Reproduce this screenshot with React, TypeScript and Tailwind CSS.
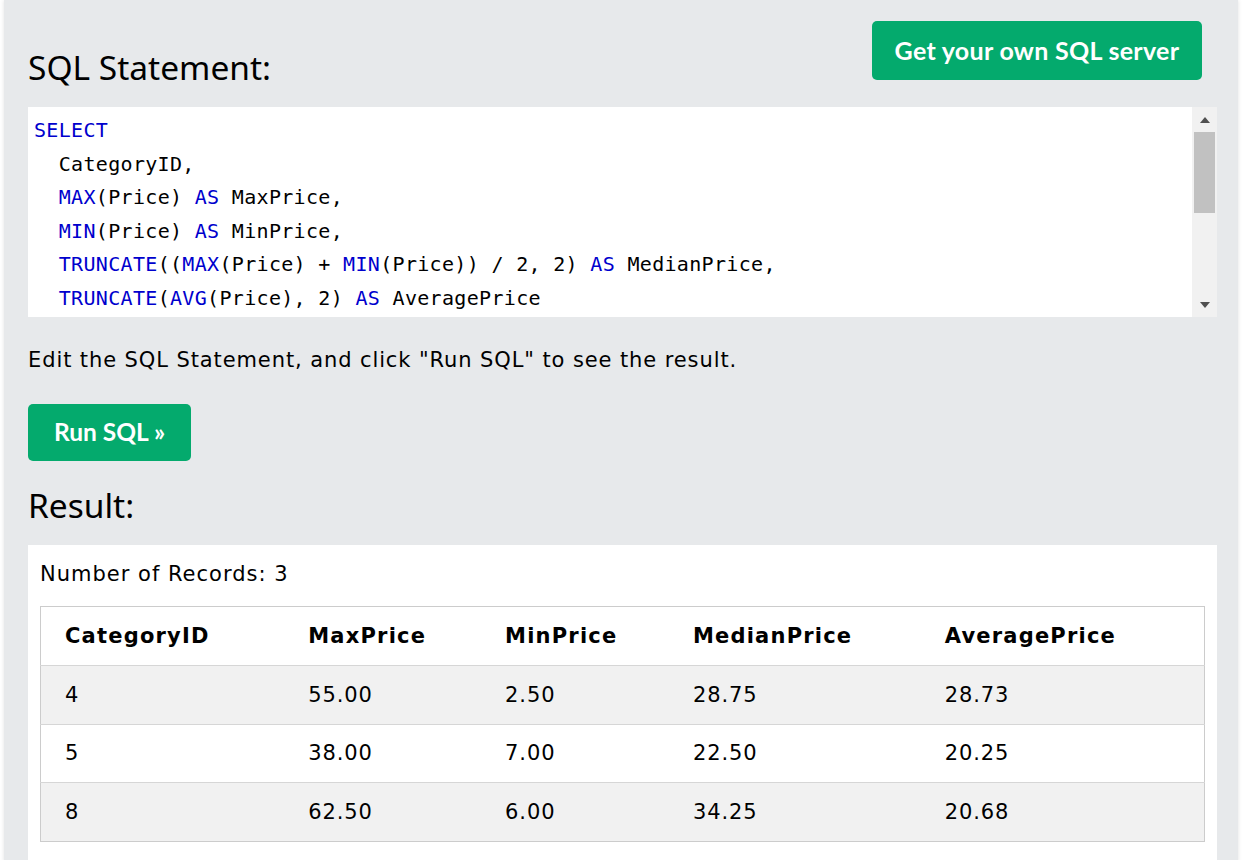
const KW = "text-[#0000cd]";

function Kw({ children }: { children: React.ReactNode }) {
  return <span className={KW}>{children}</span>;
}

const rows = [
  ["4", "55.00", "2.50", "28.75", "28.73"],
  ["5", "38.00", "7.00", "22.50", "20.25"],
  ["8", "62.50", "6.00", "34.25", "20.68"],
];

const headers = ["CategoryID", "MaxPrice", "MinPrice", "MedianPrice", "AveragePrice"];
const colWidths = ["w-[244px]", "w-[197px]", "w-[188px]", "w-[252px]", "w-[284px]"];

function CodeBox() {
  return (
    <div className="flex h-[210px] bg-white">
      <pre className="flex-1 overflow-hidden pl-[6px] pt-[7px] font-['DejaVu_Sans_Mono',monospace] text-[20px] leading-[33.6px] tracking-[0.32px] text-black">
        <Kw>SELECT</Kw>
        {"\n  CategoryID,\n  "}
        <Kw>MAX</Kw>
        {"(Price) "}
        <Kw>AS</Kw>
        {" MaxPrice,\n  "}
        <Kw>MIN</Kw>
        {"(Price) "}
        <Kw>AS</Kw>
        {" MinPrice,\n  "}
        <Kw>TRUNCATE</Kw>
        {"(("}
        <Kw>MAX</Kw>
        {"(Price) + "}
        <Kw>MIN</Kw>
        {"(Price)) / 2, 2) "}
        <Kw>AS</Kw>
        {" MedianPrice,\n  "}
        <Kw>TRUNCATE</Kw>
        {"("}
        <Kw>AVG</Kw>
        {"(Price), 2) "}
        <Kw>AS</Kw>
        {" AveragePrice"}
      </pre>
      {/* scrollbar */}
      <div className="flex w-[25px] flex-col items-center bg-[#f1f1f1]">
        <div className="flex h-[25px] items-center justify-center">
          <svg width="10" height="6" viewBox="0 0 10 6">
            <path d="M0 6 L5 0 L10 6 Z" fill="#505050" />
          </svg>
        </div>
        <div className="h-[81px] w-[21px] bg-[#c1c1c1]" />
        <div className="flex-1" />
        <div className="flex h-[25px] items-center justify-center">
          <svg width="10" height="6" viewBox="0 0 10 6">
            <path d="M0 0 L5 6 L10 0 Z" fill="#505050" />
          </svg>
        </div>
      </div>
    </div>
  );
}

export default function App() {
  return (
    <div className="min-h-[860px] bg-white">
      <div className="ml-[4px] mr-[5px] min-h-[860px] bg-[#e7e9eb] pl-[24px] pr-[21px] pt-[21px] shadow-[0_0_4px_rgba(0,0,0,0.12)]">
        <div className="flex items-start justify-between pr-[15px]">
          <h2 className="mt-[24px] font-['Noto_Sans',sans-serif] text-[33.5px] leading-[44px] text-black">
            SQL Statement:
          </h2>
          <button className="h-[59px] w-[330px] rounded-[5px] bg-[#04aa6d] font-['Lato',sans-serif] text-[25px] font-bold tracking-[0.3px] text-white">
            Get your own SQL server
          </button>
        </div>
        <div className="mt-[18px]">
          <CodeBox />
        </div>
        <p className="mt-[28px] font-['DejaVu_Sans',sans-serif] text-[21px] leading-[30px] tracking-[0.9px] text-black">
          Edit the SQL Statement, and click "Run SQL" to see the result.
        </p>
        <button className="mt-[29px] h-[57px] w-[163px] rounded-[5px] bg-[#04aa6d] font-['Lato',sans-serif] text-[24.5px] font-bold text-white">
          Run SQL »
        </button>
        <h2 className="mt-[22px] font-['Noto_Sans',sans-serif] text-[33.5px] leading-[44px] text-black">
          Result:
        </h2>
        <div className="mt-[18px] bg-white px-[12px] pb-[20px] pt-[14px]">
          <div className="font-['DejaVu_Sans',sans-serif] text-[21px] leading-[30px] tracking-[1px] text-black">
            Number of Records: 3
          </div>
          <table className="mt-[17px] w-full border-collapse border border-[#cccccc] font-['DejaVu_Sans',sans-serif] text-[21px] tracking-[0.9px] text-black">
            <thead>
              <tr className="h-[59px] bg-white">
                {headers.map((h, i) => (
                  <th key={h} className={`${colWidths[i]} pl-[24px] pt-[2px] text-left font-bold tracking-[1.2px]`}>
                    {h}
                  </th>
                ))}
              </tr>
            </thead>
            <tbody>
              {rows.map((r, ri) => (
                <tr
                  key={ri}
                  className={`h-[58.5px] border-t border-[#d6d6d6] ${ri % 2 === 0 ? "bg-[#f1f1f1]" : "bg-white"}`}
                >
                  {r.map((c, ci) => (
                    <td key={ci} className="pl-[24px] pt-[1px]">
                      {c}
                    </td>
                  ))}
                </tr>
              ))}
            </tbody>
          </table>
        </div>
      </div>
    </div>
  );
}
